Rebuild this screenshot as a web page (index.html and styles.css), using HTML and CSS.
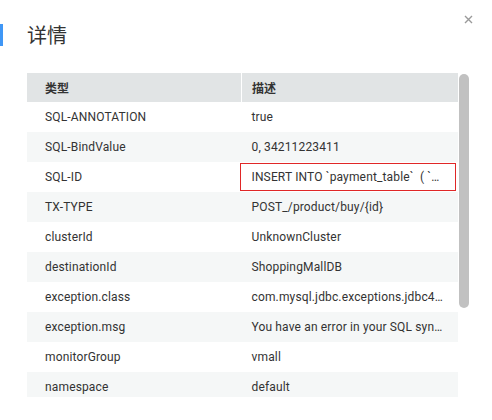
FILE: index.html
```html
<!DOCTYPE html>
<html lang="zh">
<head>
<meta charset="utf-8">
<title>详情</title>
<link rel="stylesheet" href="styles.css">
</head>
<body>
<div class="dialog">
  <button class="close" aria-label="close">
    <svg width="9" height="9" viewBox="0 0 9 9"><path d="M1 1L8 8M8 1L1 8" stroke="#9a9a9a" stroke-width="1.4" fill="none"/></svg>
  </button>
  <h2 class="title">详情</h2>
  <div class="table-wrap">
    <div class="viewport">
      <table class="grid">
        <thead>
          <tr><th class="c1">类型</th><th class="c2">描述</th></tr>
        </thead>
        <tbody>
          <tr><td class="c1">SQL-ANNOTATION</td><td class="c2">true</td></tr>
          <tr><td class="c1">SQL-BindValue</td><td class="c2">0, 34211223411</td></tr>
          <tr><td class="c1">SQL-ID</td><td class="c2 marked"><span class="clip">INSERT INTO `payment_table`&nbsp; ( `id`, `order_id`, `amount` ) VALUES ( ?, ?, ? )</span></td></tr>
          <tr><td class="c1">TX-TYPE</td><td class="c2">POST_/product/buy/{id}</td></tr>
          <tr><td class="c1">clusterId</td><td class="c2">UnknownCluster</td></tr>
          <tr><td class="c1">destinationId</td><td class="c2">ShoppingMallDB</td></tr>
          <tr><td class="c1">exception.class</td><td class="c2">com.mysql.jdbc.exceptions.jdbc4.MySQLSyntaxErrorException</td></tr>
          <tr><td class="c1">exception.msg</td><td class="c2">You have an error in your SQL syntax; check the manual</td></tr>
          <tr><td class="c1">monitorGroup</td><td class="c2">vmall</td></tr>
          <tr><td class="c1">namespace</td><td class="c2">default</td></tr>
          <tr><td class="c1">peer.address</td><td class="c2">192.168.0.12:3306</td></tr>
          <tr><td class="c1">serviceType</td><td class="c2">MYSQL</td></tr>
          <tr><td class="c1">spanKind</td><td class="c2">CLIENT</td></tr>
          <tr><td class="c1">status</td><td class="c2">500</td></tr>
        </tbody>
      </table>
    </div>
    <div class="scrollbar"><div class="thumb"></div></div>
  </div>
</div>
</body>
</html>
```

FILE: styles.css
```css
html, body {
  margin: 0;
  padding: 0;
  background: #ffffff;
}

body {
  font-family: Roboto, "Noto Sans CJK SC", sans-serif;
  font-size: 12px;
  color: #333333;
}

.dialog {
  position: relative;
  width: 492px;
  height: 420px;
  padding-top: 24px;
  box-sizing: border-box;
}

.close {
  position: absolute;
  top: 14px;
  left: 463px;
  width: 11px;
  height: 11px;
  padding: 1px;
  border: 0;
  background: transparent;
  display: flex;
  align-items: center;
  justify-content: center;
}

.title {
  margin: 0;
  height: 22px;
  line-height: 22px;
  font-size: 20px;
  font-weight: normal;
  font-family: "Noto Sans CJK SC", sans-serif;
  color: #333333;
  border-left: 3px solid #3f97f6;
  padding-left: 24px;
}

.table-wrap {
  margin-top: 27px;
  margin-left: 27px;
  width: 442px;
  height: 324px;
  display: flex;
}

.viewport {
  flex: 0 0 432px;
  height: 324px;
  overflow: hidden;
}

.scrollbar {
  flex: 0 0 10px;
  padding-top: 1px;
}

.thumb {
  height: 234px;
  background: #c1c1c1;
  border-radius: 5px;
}

.grid {
  width: 431px;
  border-collapse: collapse;
  table-layout: fixed;
}

.grid th {
  height: 29px;
  background: #e1e4e5;
  text-align: left;
  font-family: "Noto Sans CJK SC", sans-serif;
  font-weight: bold;
  font-size: 12px;
  color: #333333;
  padding: 0;
}

.grid th.c1 {
  border-right: 1px solid #ffffff;
}

.grid td {
  height: 30px;
  padding: 0;
  white-space: nowrap;
  overflow: hidden;
  text-overflow: ellipsis;
  letter-spacing: 0.15px;
}

.c1 {
  width: 196px;
  padding-left: 18px !important;
}

.c2 {
  padding-left: 10px !important;
  padding-right: 14px !important;
}

.grid tbody tr:nth-child(even) td {
  background: #f5f7f7;
}

.grid td.marked {
  position: relative;
  overflow: visible;
}

.clip {
  display: block;
  overflow: hidden;
  text-overflow: ellipsis;
  white-space: nowrap;
  padding-right: 4px;
}

.marked::after {
  content: "";
  position: absolute;
  left: -2px;
  right: 2px;
  top: 1px;
  bottom: 1px;
  border: 1px solid #e02727;
  pointer-events: none;
}
```
